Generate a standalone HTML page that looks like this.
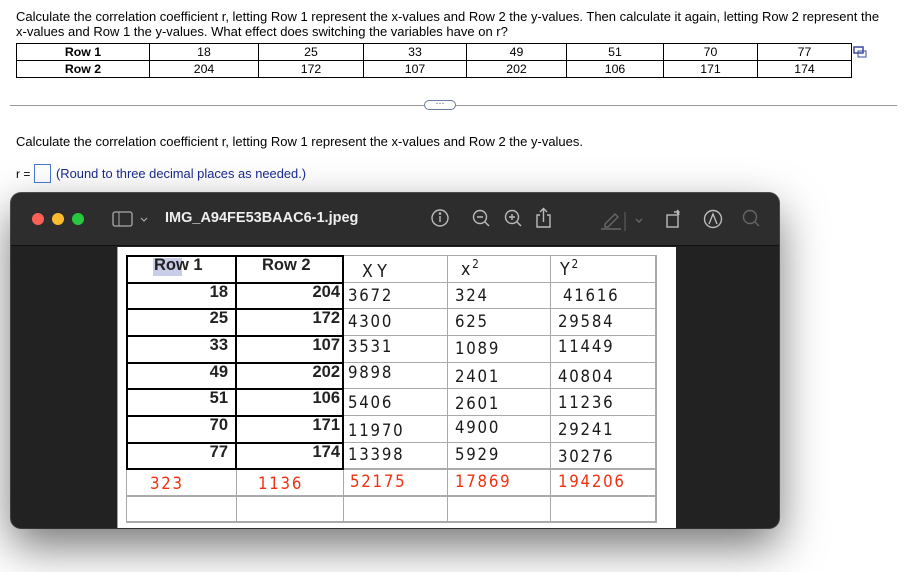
<!DOCTYPE html>
<html><head><meta charset="utf-8"><style>
*{margin:0;padding:0;box-sizing:border-box}
body{width:921px;height:572px;overflow:hidden;background:#fff;font-family:"Liberation Sans",Arial,sans-serif;position:relative;color:#000}
.a{position:absolute}
.q{left:16px;top:9px;font-size:13px;line-height:15px;width:900px;white-space:nowrap}
table.t{position:absolute;left:16px;top:43px;border-collapse:collapse;font-size:12.3px}
table.t td{border:1px solid #000;height:17px;text-align:center;padding:0;line-height:14px}
.win{left:11px;top:193px;width:768px;height:335px;background:#222;border-radius:10px;box-shadow:0 18px 45px rgba(0,0,0,.55),0 0 0 1px #555;overflow:hidden}
.tb{left:0;top:0;width:768px;height:53px;background:#2d2d2d;border-bottom:1px solid #111}
.dot{width:12px;height:12px;border-radius:50%;top:20px}
.img{left:106px;top:54px;width:559px;height:281px;background:#fff;border-left:1px solid #f08080}
.g{position:absolute;background:#aaa}
.b{position:absolute;background:#000}
.h{position:absolute;font-family:"DejaVu Sans",sans-serif;font-weight:normal;font-size:17px;color:#1a1a1a;letter-spacing:2px;transform:scaleX(0.88);transform-origin:left}
.r{color:#f03010}
.n{position:absolute;font-family:"Liberation Sans",sans-serif;font-weight:bold;font-size:16.5px;color:#222;text-align:right}
</style></head><body>
<div class="a q">Calculate the correlation coefficient r, letting Row 1 represent the x-values and Row 2 the y-values. Then calculate it again, letting Row 2 represent the<br>x-values and Row 1 the y-values. What effect does switching the variables have on r?</div>
<table class="t">
<tr><td style="width:133px"><b>Row 1</b></td><td style="width:109px">18</td><td style="width:105px">25</td><td style="width:103px">33</td><td style="width:100px">49</td><td style="width:97px">51</td><td style="width:94px">70</td><td style="width:94px">77</td></tr>
<tr><td><b>Row 2</b></td><td>204</td><td>172</td><td>107</td><td>202</td><td>106</td><td>171</td><td>174</td></tr>
</table>
<svg class="a" style="left:853px;top:46px" width="14" height="12"><rect x="1" y="1" width="9" height="6" fill="none" stroke="#3a4aa0" stroke-width="1.5"/><rect x="5" y="5" width="8" height="6" fill="none" stroke="#3a4aa0" stroke-width="1"/></svg>
<div class="a" style="left:10px;top:105px;width:887px;height:1px;background:#999"></div>
<div class="a" style="left:424px;top:100px;width:32px;height:10px;border:1px solid #6a7aa0;border-radius:5px;background:#fff;font-size:9px;line-height:5px;text-align:center;color:#345">···</div>
<div class="a" style="left:16px;top:134px;font-size:13px">Calculate the correlation coefficient r, letting Row 1 represent the x-values and Row 2 the y-values.</div>
<div class="a" style="left:16px;top:167px;font-size:12px">r =</div>
<div class="a" style="left:34px;top:164px;width:17px;height:19px;border:1px solid #4a7ad0"></div>
<div class="a" style="left:56px;top:166px;font-size:12.9px;color:#1a2a90">(Round to three decimal places as needed.)</div>

<div class="a win">
 <div class="a tb">
  <div class="a dot" style="left:21px;background:#fe5f57"></div>
  <div class="a dot" style="left:41px;background:#febc2e"></div>
  <div class="a dot" style="left:61px;background:#28c840"></div>
  <svg class="a" style="left:101px;top:18px" width="36" height="16"><rect x="1" y="1" width="19" height="14" rx="2" fill="none" stroke="#aaa" stroke-width="1.3"/><line x1="7" y1="1" x2="7" y2="15" stroke="#aaa"/><path d="M29 7l3 3 3-3" fill="none" stroke="#aaa" stroke-width="1.2"/></svg>
  <div class="a" style="left:154px;top:17px;color:#eee;font-weight:bold;font-size:14.5px">IMG_A94FE53BAAC6-1.jpeg</div>
  <svg class="a" style="left:418px;top:14px" width="340" height="26" fill="none" stroke="#bbb" stroke-width="1.4">
   <circle cx="11" cy="11" r="8"/><line x1="11" y1="9" x2="11" y2="15"/><circle cx="11" cy="6.5" r=".6" fill="#bbb"/>
   <circle cx="51" cy="10" r="6.5"/><line x1="56" y1="15" x2="60" y2="19"/><line x1="48" y1="10" x2="54" y2="10"/>
   <circle cx="83" cy="10" r="6.5"/><line x1="88" y1="15" x2="92" y2="19"/><line x1="80" y1="10" x2="86" y2="10"/><line x1="83" y1="7" x2="83" y2="13"/>
   <path d="M111 8h-3v12h13v-12h-3M114.5 15v-13M111 5l3.5-3.5 3.5 3.5"/>
   <path d="M176 17l10-10 3 3-10 10h-3z M172 22h20" stroke="#666"/>
   <line x1="196" y1="5" x2="196" y2="24" stroke="#555"/>
   <path d="M207 12l3 3 3-3" stroke="#666"/>
   <rect x="238" y="8" width="11" height="12"/><path d="M245 5h4l1 3M248 3l2 2-2 2"/>
   <circle cx="284" cy="12" r="8.5"/><path d="M280 17l4-10 4 10"/>
   <circle cx="321" cy="10" r="6.5" stroke="#666"/><line x1="326" y1="15" x2="330" y2="19" stroke="#666"/>
  </svg>
 </div>
 <div class="a img">
  <div class="g" style="left:8px;top:8px;width:1px;height:267px"></div>
  <div class="g" style="left:537px;top:8px;width:2px;height:267px"></div>
  <div class="g" style="left:118px;top:221px;width:1px;height:54px"></div>
  <div class="g" style="left:225px;top:8px;width:1px;height:267px"></div>
  <div class="g" style="left:329px;top:8px;width:1px;height:267px"></div>
  <div class="g" style="left:432px;top:8px;width:1px;height:267px"></div>
  <div class="g" style="left:8px;top:8px;width:530px;height:1px"></div>
  <div class="g" style="left:8px;top:35px;width:530px;height:1px"></div>
  <div class="g" style="left:8px;top:61px;width:530px;height:1px"></div>
  <div class="g" style="left:8px;top:88px;width:530px;height:1px"></div>
  <div class="g" style="left:8px;top:115px;width:530px;height:1px"></div>
  <div class="g" style="left:8px;top:141px;width:530px;height:1px"></div>
  <div class="g" style="left:8px;top:168px;width:530px;height:1px"></div>
  <div class="g" style="left:8px;top:195px;width:530px;height:1px"></div>
  <div class="g" style="left:8px;top:221px;width:530px;height:2px"></div>
  <div class="g" style="left:8px;top:248px;width:530px;height:2px"></div>
  <div class="g" style="left:8px;top:274px;width:531px;height:2px"></div>
  <div class="b" style="left:8px;top:8px;width:2px;height:214px"></div>
  <div class="b" style="left:117px;top:8px;width:1.5px;height:214px"></div>
  <div class="b" style="left:224px;top:8px;width:1.5px;height:214px"></div>
  <div class="b" style="left:8px;top:8px;width:218px;height:2px"></div>
  <div class="b" style="left:8px;top:35px;width:218px;height:1.5px"></div>
  <div class="b" style="left:8px;top:61px;width:218px;height:1.5px"></div>
  <div class="b" style="left:8px;top:88px;width:218px;height:1.5px"></div>
  <div class="b" style="left:8px;top:115px;width:218px;height:1.5px"></div>
  <div class="b" style="left:8px;top:141px;width:218px;height:1.5px"></div>
  <div class="b" style="left:8px;top:168px;width:218px;height:1.5px"></div>
  <div class="b" style="left:8px;top:195px;width:218px;height:1.5px"></div>
  <div class="b" style="left:8px;top:221px;width:218px;height:2px"></div>
  <div class="a" style="left:35px;top:11px;width:29px;height:18px;background:#c8cde8"></div>
  <div class="n" style="left:36px;top:9px">Row 1</div>
  <div class="n" style="left:144px;top:9px">Row 2</div>
  <div class="n" style="left:20px;top:36px;width:90px">18</div>
  <div class="n" style="left:120px;top:36px;width:102px">204</div>
  <div class="n" style="left:20px;top:62px;width:90px">25</div>
  <div class="n" style="left:120px;top:62px;width:102px">172</div>
  <div class="n" style="left:20px;top:89px;width:90px">33</div>
  <div class="n" style="left:120px;top:89px;width:102px">107</div>
  <div class="n" style="left:20px;top:116px;width:90px">49</div>
  <div class="n" style="left:120px;top:116px;width:102px">202</div>
  <div class="n" style="left:20px;top:142px;width:90px">51</div>
  <div class="n" style="left:120px;top:142px;width:102px">106</div>
  <div class="n" style="left:20px;top:169px;width:90px">70</div>
  <div class="n" style="left:120px;top:169px;width:102px">171</div>
  <div class="n" style="left:20px;top:196px;width:90px">77</div>
  <div class="n" style="left:120px;top:196px;width:102px">174</div>
  <div class="h" style="left:244px;top:14px;font-size:18px;letter-spacing:5px">XY</div>
  <div class="h" style="left:343px;top:10px;font-size:18px">x<sup style="font-size:12px">2</sup></div>
  <div class="h" style="left:442px;top:10px;font-size:18px">Y<sup style="font-size:12px">2</sup></div>
  <div class="h" style="left:230px;top:39px">3672</div><div class="h" style="left:337px;top:39px">324</div><div class="h" style="left:445px;top:39px">41616</div>
  <div class="h" style="left:230px;top:65px">4300</div><div class="h" style="left:337px;top:65px">625</div><div class="h" style="left:440px;top:65px">29584</div>
  <div class="h" style="left:230px;top:90px">3531</div><div class="h" style="left:337px;top:92px">1089</div><div class="h" style="left:440px;top:90px">11449</div>
  <div class="h" style="left:230px;top:116px">9898</div><div class="h" style="left:337px;top:120px">2401</div><div class="h" style="left:440px;top:120px">40804</div>
  <div class="h" style="left:230px;top:146px">5406</div><div class="h" style="left:337px;top:147px">2601</div><div class="h" style="left:440px;top:146px">11236</div>
  <div class="h" style="left:230px;top:174px">11970</div><div class="h" style="left:337px;top:171px">4900</div><div class="h" style="left:440px;top:173px">29241</div>
  <div class="h" style="left:230px;top:198px">13398</div><div class="h" style="left:337px;top:198px">5929</div><div class="h" style="left:440px;top:200px">30276</div>
  <div class="h r" style="left:32px;top:227px">323</div><div class="h r" style="left:140px;top:227px">1136</div><div class="h r" style="left:232px;top:225px">52175</div><div class="h r" style="left:337px;top:225px">17869</div><div class="h r" style="left:440px;top:225px">194206</div>
 </div>
</div>
</body></html>
